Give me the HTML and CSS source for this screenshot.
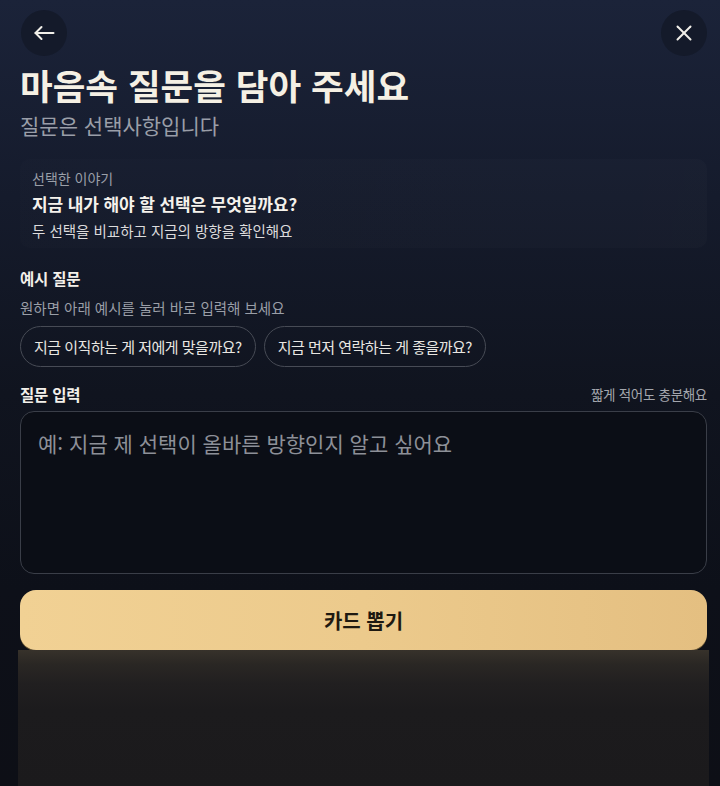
FILE: index.html
```html
<!DOCTYPE html>
<html lang="ko">
<head>
<meta charset="utf-8">
<title>마음속 질문을 담아 주세요</title>
<link rel="stylesheet" href="styles.css">
</head>
<body>
<div class="page">
  <header class="topbar">
    <button class="icon-btn" aria-label="뒤로">
      <svg width="22" height="22" viewBox="0 0 22 22" fill="none" stroke="#f1efe9" stroke-width="2" stroke-linecap="round" stroke-linejoin="round"><path d="M20.5 11H2.5"/><path d="M8.5 5L2.5 11L8.5 17"/></svg>
    </button>
    <button class="icon-btn" aria-label="닫기">
      <svg width="18" height="18" viewBox="0 0 18 18" fill="none" stroke="#f1efe9" stroke-width="2" stroke-linecap="round"><path d="M2.5 2.5L15.5 15.5"/><path d="M15.5 2.5L2.5 15.5"/></svg>
    </button>
  </header>

  <h1 class="title">마음속 질문을 담아 주세요</h1>
  <p class="subtitle">질문은 선택사항입니다</p>

  <section class="story-card">
    <div class="story-label">선택한 이야기</div>
    <div class="story-title">지금 내가 해야 할 선택은 무엇일까요?</div>
    <div class="story-desc">두 선택을 비교하고 지금의 방향을 확인해요</div>
  </section>

  <h2 class="section-title ex-title">예시 질문</h2>
  <p class="hint">원하면 아래 예시를 눌러 바로 입력해 보세요</p>
  <div class="chips">
    <button class="chip">지금 이직하는 게 저에게 맞을까요?</button>
    <button class="chip">지금 먼저 연락하는 게 좋을까요?</button>
  </div>

  <div class="input-head">
    <h2 class="section-title">질문 입력</h2>
    <span class="input-note">짧게 적어도 충분해요</span>
  </div>
  <textarea class="question" placeholder="예: 지금 제 선택이 올바른 방향인지 알고 싶어요"></textarea>

  <button class="draw-btn">카드 뽑기</button>
  <div class="footer-glow"></div>
</div>
</body>
</html>
```

FILE: styles.css
```css
* { box-sizing: border-box; }
html, body {
  margin: 0;
  padding: 0;
  height: 100%;
}
body {
  background: linear-gradient(180deg, #1b2339 0%, #151b2c 25%, #10141f 50%, #0d1019 75%, #0d0f16 100%);
  font-family: "Noto Sans CJK KR", "Noto Sans", sans-serif;
  color: #f2efe8;
  overflow: hidden;
}
.page {
  display: flex;
  flex-direction: column;
  padding: 10px 13px 0 20px;
  height: 786px;
}
.topbar {
  display: flex;
  justify-content: space-between;
  align-items: center;
  height: 46px;
}
.icon-btn {
  width: 46px;
  height: 46px;
  border-radius: 50%;
  border: 0;
  background: #141a2a;
  display: flex;
  align-items: center;
  justify-content: center;
  padding: 0;
}
.icon-btn:first-child { margin-left: 1px; }
.title {
  margin: 7px 0 0;
  font-size: 35.5px;
  line-height: 44px;
  font-weight: 700;
  color: #f5f0e4;
  letter-spacing: 0;
}
.subtitle {
  margin: 4px 0 0;
  font-size: 21px;
  line-height: 28px;
  color: #9a9ea8;
}
.story-card {
  margin-top: 20px;
  padding: 10px 12px 7px;
  border-radius: 10px;
  background: linear-gradient(90deg, rgba(255,255,255,0.006), rgba(255,255,255,0.016));
  display: flex;
  flex-direction: column;
  gap: 6px;
}
.story-label {
  font-size: 14px;
  line-height: 18px;
  color: #9a9fa8;
}
.story-title {
  font-size: 17px;
  line-height: 22px;
  font-weight: 700;
  color: #f5f2ec;
  letter-spacing: -0.1px;
}
.story-desc {
  font-size: 14.5px;
  line-height: 20px;
  color: #dcdbdc;
}
.section-title {
  margin: 0;
  font-size: 15.5px;
  line-height: 20px;
  font-weight: 700;
  color: #f3f0ea;
  letter-spacing: -0.2px;
}
.ex-title { margin-top: 20px; }
.hint {
  margin: 10px 0 0;
  font-size: 14.5px;
  line-height: 20px;
  color: #9a9ea7;
}
.chips {
  display: flex;
  gap: 8px;
  margin-top: 8px;
}
.chip {
  height: 41px;
  padding: 0 13px;
  border-radius: 21px;
  border: 1px solid #474b55;
  background: transparent;
  color: #e8e6e1;
  font-family: "Noto Sans CJK KR", "Noto Sans", sans-serif;
  font-size: 15px;
  letter-spacing: -0.5px;
}
.input-head {
  display: flex;
  justify-content: space-between;
  align-items: center;
  margin-top: 17px;
}
.input-note {
  font-size: 13.5px;
  line-height: 20px;
  color: #a3a6ad;
  letter-spacing: -0.3px;
}
.question {
  margin-top: 7px;
  height: 163px;
  width: 100%;
  resize: none;
  border: 1px solid #3a3e48;
  border-radius: 14px;
  background: #0b0e16;
  padding: 16px 17px;
  font-family: "Noto Sans CJK KR", "Noto Sans", sans-serif;
  font-size: 21px;
  line-height: 30px;
  letter-spacing: 0;
  color: #e8e6e1;
  outline: none;
}
.question::placeholder { color: #8d9098; }
.draw-btn {
  margin-top: 16px;
  height: 60px;
  width: 100%;
  border: 0;
  border-radius: 16px;
  background: linear-gradient(90deg, #f1d194 0%, #ecca8c 50%, #e4bf81 100%);
  color: #1e1911;
  font-family: "Noto Sans CJK KR", "Noto Sans", sans-serif;
  font-size: 20px;
  font-weight: 700;
  box-shadow: 0 1px 0 #6e5830;
}
.footer-glow {
  flex: 1;
  margin: 0 -2px;
  background: linear-gradient(180deg, #37322b 0px, #2a2724 14px, #211f20 34px, #1c1b1d 60px, #1b1a1c 100%);
}
```
